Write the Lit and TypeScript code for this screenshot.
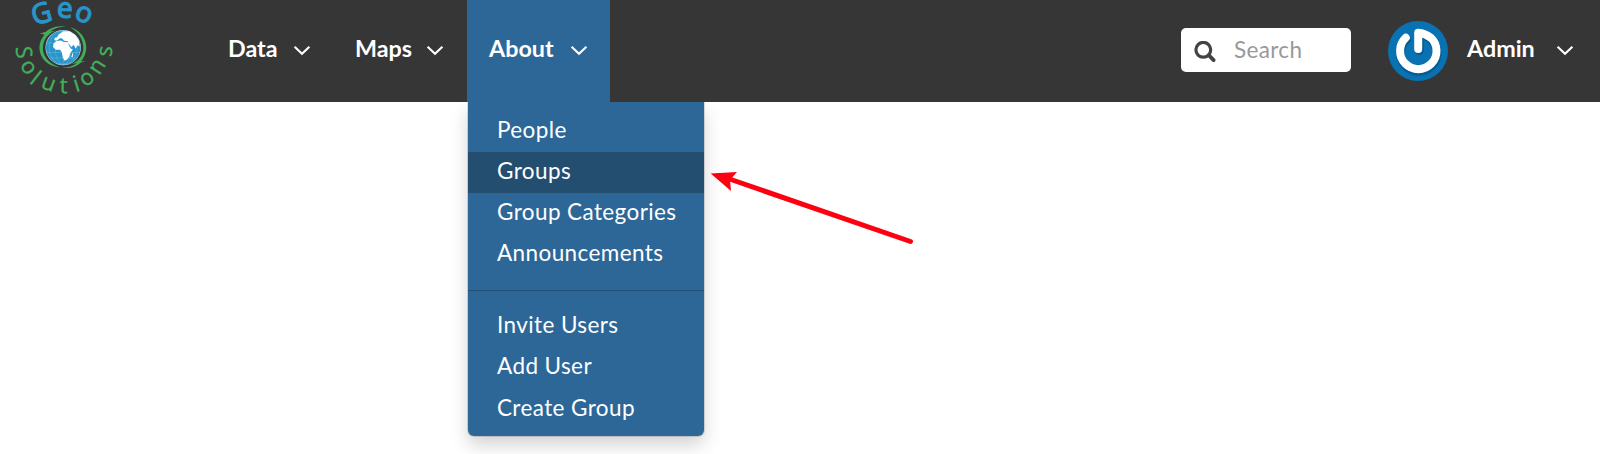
import { LitElement, html, css, svg } from "lit";
import { customElement } from "lit/decorators.js";

const chevron = html`<svg class="chevron" width="18" height="11" viewBox="0 0 18 11">
  <path d="M1.6 1.7 L9 8.7 L16.4 1.7" fill="none" stroke="#fff" stroke-width="2.1" />
</svg>`;

type Glyph = [string, number, number, number];

// Letter, centre x, centre y, rotation in degrees
const geoLetters: Glyph[] = [
  ["G", 41.4, 13.2, -16],
  ["e", 64.8, 10.2, 3],
  ["o", 83.6, 14.4, 22],
];
const solutionsLetters: Glyph[] = [
  ["S", 23.8, 52.3, 84],
  ["o", 28, 67.6, 58],
  ["l", 35.6, 78, 38],
  ["u", 48.4, 84.2, 20],
  ["t", 63.8, 85.6, 1],
  ["i", 76.3, 84, -17],
  ["o", 87.2, 79, -36],
  ["n", 97.8, 66.8, -58],
  ["s", 106, 51.4, -82],
];

const drawGlyph = ([letter, x, y, angle]: Glyph, drop: number) =>
  svg`<text transform="translate(${x} ${y}) rotate(${angle})" y=${drop} text-anchor="middle">${letter}</text>`;

@customElement("geo-logo")
class GeoLogo extends LitElement {
  static styles = css`
    :host { display: block; width: 130px; height: 102px; }
    svg { display: block; }
    .geo { font: 28px "Noto Sans", sans-serif; fill: #2795c9; stroke: #2795c9; stroke-width: 1.1; }
    .solutions { font: 22.5px "Noto Sans", sans-serif; fill: #42ae5a; stroke: #42ae5a; stroke-width: 0.2; }
  `;
  render() {
    return html`<svg width="130" height="102" viewBox="0 0 130 102">
      <g class="geo">
        ${geoLetters.map((g) => drawGlyph(g, g[0] === "G" ? 10 : 7.5))}
      </g>
      <circle cx="63.2" cy="47.6" r="17.7" fill="#b9dcee" />
      <circle cx="63.2" cy="47.6" r="17.2" fill="#2795c9" />
      <g fill="none" stroke="#8fc8e4" stroke-width=".35">
        <path d="M46.5 43H80M46.5 52.5H80M49 58H77M63.2 30.5V65" />
        <ellipse cx="63.2" cy="47.6" rx="8" ry="17" />
        <ellipse cx="63.2" cy="47.6" rx="14" ry="17" />
      </g>
      <g fill="#fff">
        <path d="M53.5 43.5L56.5 41L61 40.6L63.5 42L67.5 42L69 45.5L71 49L73 49.2L70.2 53L69.4 56.5L67 59.5L64.5 60.8L62.7 57L61.8 52.2L60 49.8L55.8 49.8L53 47Z" />
        <path d="M54.3 40.2L54.7 37.8L57.3 37.2L58.4 34.7L63.3 31.3L69.5 31.2L75.2 35L78.8 40.2L79.7 46.5L77.5 45.3L75.6 48.7L73.8 44.8L71.5 47L68 43.3L67.8 41.2L64 40.7L62.2 38.4L59.8 38.2L57.4 40.4Z" />
        <path d="M72.3 53.5L73.3 53L72.6 57.2L71.4 57Z" />
      </g>
      <g fill="#42ae5a">
        <path d="M39.4 33.8C44.5 31.8 50 31.4 55.3 30.7C47.5 33.5 42.8 40.3 42.9 48.4C43 55.8 48 63 60 67.6C48 66.5 39.7 58.3 39.4 48C39.3 42.9 41.5 38 45 34Z" />
        <path d="M43 34.5C48.5 27.8 58 24.8 66.2 26.8C57.8 26.6 51 29.6 46.2 35Z" />
        <path d="M86 61.3C80.8 63.1 75.6 63.3 70.6 64.3C78.5 61.7 83.3 55.6 83.3 47.7C83.3 40 79.3 32.5 70 27.3C80.8 30 86.4 39.3 86.3 47.5C86.2 52.8 84.3 57.5 81 61.4Z" />
        <path d="M82 61.4C76.5 67 69 69.2 62 67.6C69 67.7 74.8 65.6 79.5 60.8Z" />
      </g>
      <g class="solutions">
        ${solutionsLetters.map((g) => drawGlyph(g, "Slti".includes(g[0]) ? 7.8 : 6))}
      </g>
    </svg>`;
  }
}

@customElement("app-root")
class AppRoot extends LitElement {
  static styles = css`
    :host {
      display: block; position: relative; height: 454px; overflow: hidden;
      background: #fff; font-family: Lato, sans-serif; color: #fff;
    }
    .bar { display: flex; height: 102px; background: #363636; }
    .nav { display: flex; margin-left: 76px; }
    .item {
      position: relative; box-sizing: border-box; display: flex; height: 102px;
      padding: 33px 22px 0; font-size: 23.3px; line-height: 30px; font-weight: 700;
    }
    .data { width: 127px; }
    .maps { width: 134px; padding-right: 23px; }
    .about { width: 143px; background: #2d6798; }
    .chevron { display: block; margin: 12px 0 0 auto; }
    .menu {
      position: absolute; z-index: 1; left: 1px; top: 102px; width: 236px; height: 334px;
      box-sizing: border-box; padding-top: 9px; background: #2d6798;
      border-radius: 0 0 6px 6px; box-shadow: 0 9px 18px rgba(0,0,0,.175), 0 0 0 1px rgba(0,0,0,.13);
      font-weight: 400; font-size: 22.5px; letter-spacing: .4px;
      clip-path: inset(0 -40px -40px -40px);
    }
    .entry { height: 41.1px; line-height: 37px; padding-left: 29px; white-space: nowrap; }
    .active { background: #234e70; }
    .divider { height: 1px; margin: 14.6px 0 15.4px; background: #234e70; }
    .search {
      display: flex; box-sizing: border-box; width: 170px; height: 44px; margin: 28px 0 0 auto;
      padding-left: 13px; background: #fff; border-radius: 5px; color: #999;
      font-size: 22.5px; line-height: 43px; letter-spacing: .35px;
    }
    .glass { margin: 13px 18px 0 0; }
    .avatar { margin: 21px 0 0 37px; }
    .user { width: 152px; padding: 33px 26px 0 19px; }
    .arrow { position: absolute; left: 700px; top: 160px; }
  `;
  render() {
    const entry = (label: string, active = false) =>
      html`<div class="entry ${active ? "active" : ""}">${label}</div>`;
    return html`
      <header class="bar">
        <geo-logo></geo-logo>
        <nav class="nav">
          <div class="item data">Data${chevron}</div>
          <div class="item maps">Maps${chevron}</div>
          <div class="item about">
            About${chevron}
            <div class="menu">
              ${entry("People")}${entry("Groups", true)}${entry("Group Categories")}${entry("Announcements")}
              <div class="divider"></div>
              ${entry("Invite Users")}${entry("Add User")}${entry("Create Group")}
            </div>
          </div>
        </nav>
        <div class="search">
          <svg class="glass" width="22" height="22" viewBox="0 0 22 22" fill="none" stroke="#434343">
            <circle cx="9.3" cy="8.8" r="7.4" stroke-width="3.2" />
            <path d="M14.7 14.2 L19.6 19.1" stroke-width="3.8" stroke-linecap="round" />
          </svg>
          <span>Search</span>
        </div>
        <svg class="avatar" width="60" height="60" viewBox="0 0 60 60">
          <circle cx="30" cy="30" r="30" fill="#0872b3" />
          <g fill="none" stroke-linecap="round" stroke-linejoin="round">
            <path d="M18.2 17.5A18.2 18.2 0 1 0 42 17.2Q37 12.5 30.8 11.8V28.5" transform="translate(.5 1)" stroke="#075d93" stroke-width="9" />
            <path d="M17.8 16.7A18.2 18.2 0 1 0 42.8 16.7Q37 12.3 30.2 11.8V28" stroke="#fff" stroke-width="8" />
          </g>
        </svg>
        <div class="item user">Admin${chevron}</div>
      </header>
      <svg class="arrow" width="225" height="95" viewBox="0 0 225 95">
        <path d="M28 18.5 L210.5 81.5" stroke="#ff0011" stroke-width="5" stroke-linecap="round" />
        <path d="M10.7 13.5 L37 12 L30 20 L31 31Z" fill="#ff0011" />
      </svg>
    `;
  }
}
